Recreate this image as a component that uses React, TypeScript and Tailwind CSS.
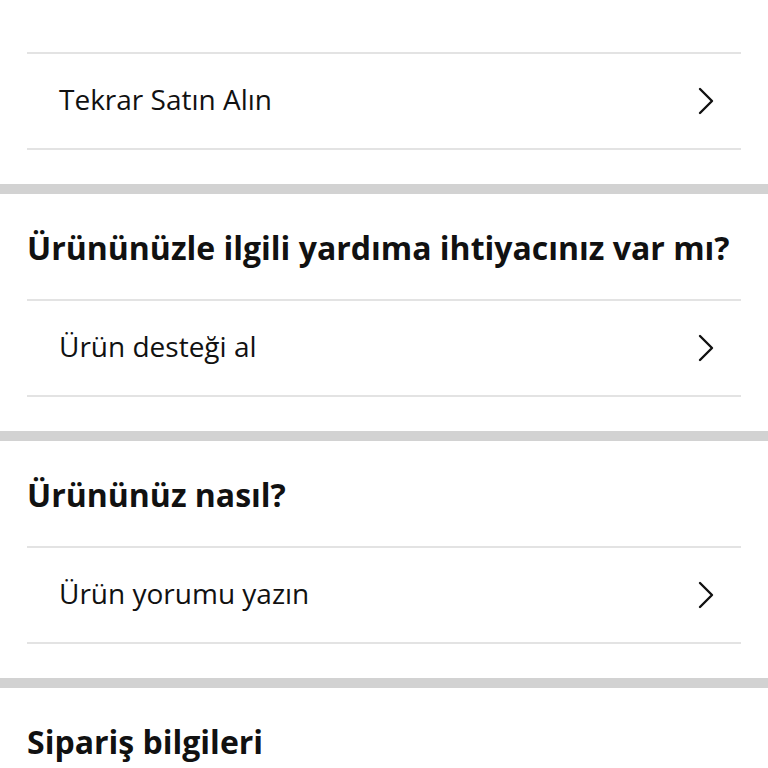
function Chevron() {
  return (
    <svg width="16" height="28" viewBox="0 0 16 28" fill="none" className="text-[#111111]">
      <path d="M2 2 L14 14 L2 26" stroke="currentColor" strokeWidth="2.4" strokeLinecap="round" strokeLinejoin="round" />
    </svg>
  );
}

function Row({ label }: { label: string }) {
  return (
    <div className="mx-[27px] border-y-2 border-[#e3e3e3] h-[98px] flex items-center justify-between pl-[32px] pr-[27px]">
      <span className="text-[28px] leading-none text-[#111111] pb-[5px]">{label}</span>
      <Chevron />
    </div>
  );
}

function Heading({ title }: { title: string }) {
  return (
    <div className="h-[105px] flex items-center px-[27px]">
      <h2 className="text-[32px] leading-none font-bold text-[#111111] pt-[3px]">{title}</h2>
    </div>
  );
}

function Band() {
  return <div className="h-[10px] bg-[#d2d2d2] mt-[34px]" />;
}

export default function App() {
  return (
    <div
      className="w-[768px] h-[768px] overflow-hidden bg-white"
      style={{ fontFamily: '"Open Sans", "Noto Sans", sans-serif' }}
    >
      <div className="pt-[52px]">
        <Row label="Tekrar Satın Alın" />
        <Band />
        <Heading title="Ürününüzle ilgili yardıma ihtiyacınız var mı?" />
        <Row label="Ürün desteği al" />
        <Band />
        <Heading title="Ürününüz nasıl?" />
        <Row label="Ürün yorumu yazın" />
        <Band />
        <Heading title="Sipariş bilgileri" />
      </div>
    </div>
  );
}
